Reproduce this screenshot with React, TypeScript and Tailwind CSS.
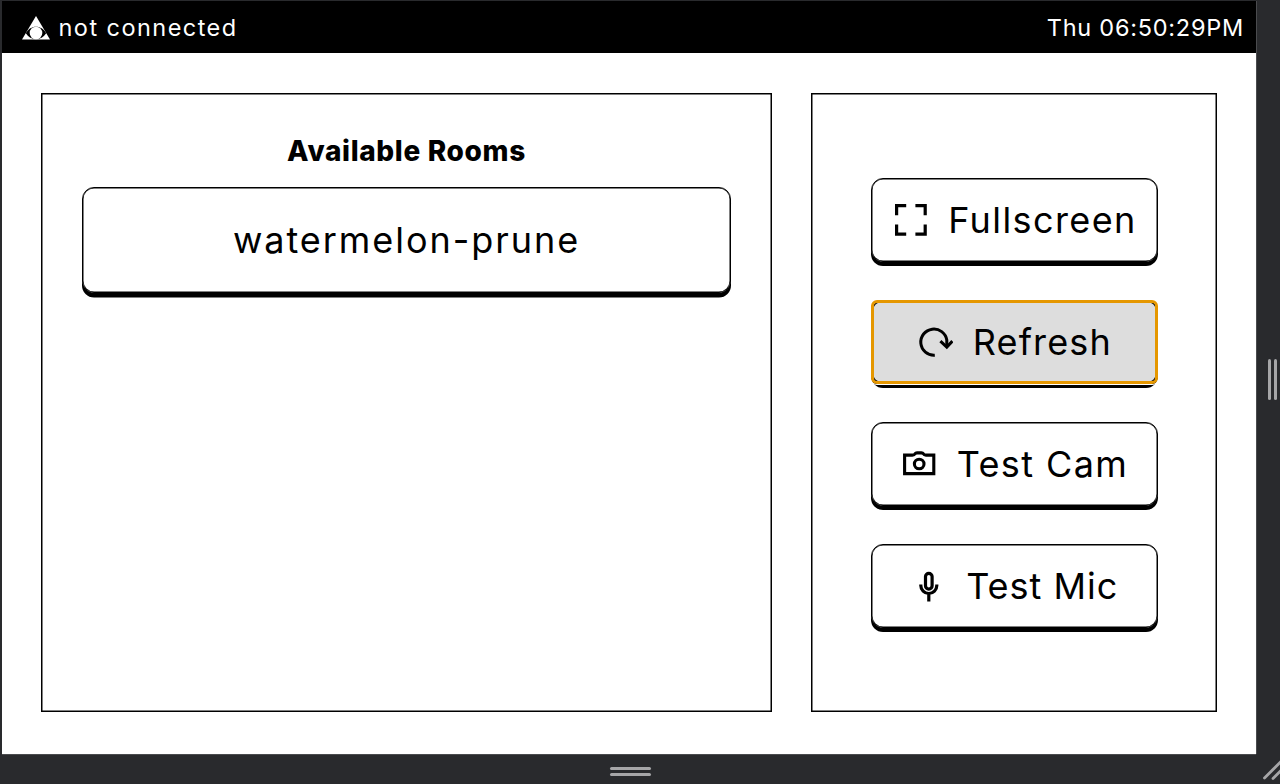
import type { ReactNode } from "react";

function Logo() {
  return (
    <svg width="28" height="24" viewBox="0 0 28 24" fill="none">
      <path d="M14 0L28 23.5H0Z" fill="#fff" />
      <path d="M3.8 17.2C8.5 8.6 19.5 8.6 24.2 17.2C19.5 25 8.5 25 3.8 17.2Z" fill="#000" />
      <circle cx="14" cy="17" r="6.3" fill="#fff" />
    </svg>
  );
}

function FullscreenIcon() {
  return (
    <svg width="36" height="36" viewBox="0 0 36 36" fill="none" stroke="#000" strokeWidth="3.2">
      <path d="M3.6 13.2V3.6H13.2M22.4 3.6H32.2V13.2M3.6 22.4V32.2H13.2M22.4 32.2H32.2V22.4" />
    </svg>
  );
}

function RefreshIcon() {
  return (
    <svg width="36" height="36" viewBox="0 0 36 36" fill="none" stroke="#000" strokeWidth="3">
      <path d="M17.8 31.2A13.1 13.1 0 1 1 29.8 16V22.5" />
      <path d="M23.4 17.1L29.8 23.1L35.4 17.1" />
    </svg>
  );
}

function CameraIcon() {
  return (
    <svg width="36" height="36" viewBox="0 0 36 36" fill="none" stroke="#000" strokeWidth="3.1">
      <path d="M3.6 9.1H11.4Q13.4 9.1 14 7.9Q14.6 6.9 16 6.9H20.4Q21.8 6.9 22.4 7.9Q23 9.1 25 9.1H32.8V27.6H3.6Z" />
      <circle cx="18.2" cy="18" r="4.8" />
    </svg>
  );
}

function MicIcon() {
  return (
    <svg width="36" height="36" viewBox="0 0 36 36" fill="none" stroke="#000" strokeWidth="3.2">
      <rect x="14.5" y="5.3" width="6.6" height="15.8" rx="3.3" />
      <path d="M9.8 16.5V17.5A8 8 0 0 0 25.8 17.5V16.5M17.8 25.5V33.5" />
    </svg>
  );
}

type ActionProps = { icon: ReactNode; label: string; spacing: string; focused?: boolean };

function Action({ icon, label, spacing, focused }: ActionProps) {
  return (
    <button
      className={`relative flex h-[84px] w-[287px] items-center justify-center gap-[19.5px] rounded-xl border border-black shadow-[inset_0_0_0_0.5px_#000,0_4px_0_#000] ${focused ? "bg-[#dddddd]" : "bg-white"}`}
    >
      {icon}
      <span className={`text-[36px] leading-none whitespace-nowrap ${spacing}`}>{label}</span>
      {focused && (
        <span className="absolute -inset-px rounded-[6px] border-[3px] border-[#e59700] shadow-[0_0_0_1px_#fff]" />
      )}
    </button>
  );
}

export default function App() {
  return (
    <div className="flex h-[784px] w-[1280px] flex-col overflow-hidden bg-[#292a2d] pt-px pl-[2px] font-['Inter',sans-serif] text-black">
      <div className="flex h-[753px]">
        <div className="flex w-[1254px] flex-col bg-white">
          <header className="flex h-[52px] items-center justify-between bg-black pt-[2px] pr-[12px] pl-5 text-[23.5px] text-white">
            <div className="flex items-center gap-[8.5px]">
              <Logo />
              <span className="tracking-[1.45px]">not connected</span>
            </div>
            <span className="tracking-[0.75px]">Thu 06:50:29PM</span>
          </header>
          <main className="flex flex-1 gap-[39px] px-[39px] pt-10 pb-[42px]">
            <section className="flex w-[731px] shrink-0 flex-col border border-black px-10 pt-[40px] shadow-[inset_0_0_0_0.5px_#000]">
              <h1 className="text-center text-[28px] leading-[34px] font-extrabold tracking-[0.65px]">
                Available Rooms
              </h1>
              <button className="mt-[19px] h-[106px] rounded-xl border border-black bg-white text-[36px] shadow-[inset_0_0_0_0.5px_#000,0_4.5px_0_#000]">
                <span className="tracking-[1.95px]">watermelon-prune</span>
              </button>
            </section>
            <section className="flex w-[406px] shrink-0 flex-col items-center gap-[38px] border border-black pt-[84px] shadow-[inset_0_0_0_0.5px_#000]">
              <Action icon={<FullscreenIcon />} label="Fullscreen" spacing="tracking-[1.4px] -mr-[1.4px]" />
              <Action icon={<RefreshIcon />} label="Refresh" spacing="tracking-[1.15px] -mr-[1.2px]" focused />
              <Action icon={<CameraIcon />} label="Test Cam" spacing="tracking-[1.4px] -mr-[1.4px]" />
              <Action icon={<MicIcon />} label="Test Mic" spacing="tracking-[1px] -mr-[1px]" />
            </section>
          </main>
        </div>
        <div className="flex flex-1 items-center justify-end gap-[2.5px] border-l border-[#4a4b4e] pt-[3px] pr-[3px]">
          <span className="h-[41px] w-[3.5px] rounded-full bg-[#a6a6a8]" />
          <span className="h-[41px] w-[3.5px] rounded-full bg-[#a6a6a8]" />
        </div>
      </div>
      <div className="flex h-[30px] justify-between">
        <div className="flex w-[1254px] flex-col items-center gap-[3px] border-t border-[#4a4b4e] pt-[12px] pl-[2px]">
          <span className="h-[3px] w-[41px] rounded-full bg-[#a6a6a8]" />
          <span className="h-[3px] w-[41px] rounded-full bg-[#a6a6a8]" />
        </div>
        <svg width="18" height="30" viewBox="0 0 18 30" stroke="#a6a6a8" strokeWidth="2.8" strokeLinecap="round">
          <path d="M2.5 24L20 6.5M11 24.5L20 15.5" />
        </svg>
      </div>
    </div>
  );
}
